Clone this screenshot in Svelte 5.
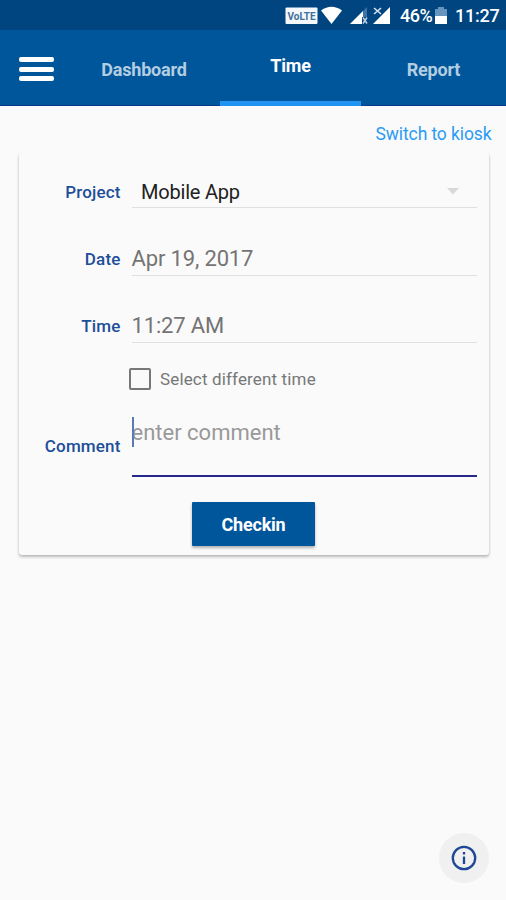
<script>
  const tabs = [
    { name: 'Dashboard', active: false },
    { name: 'Time', active: true },
    { name: 'Report', active: false }
  ];
</script>

<div class="screen">
  <div class="status">
    <svg class="signals" width="108" height="30" viewBox="0 0 108 30">
      <rect x="0.5" y="7.5" width="32" height="16.5" rx="1" fill="#f4f8fb" />
      <text x="2.5" y="19.5" font-size="10" font-weight="700" fill="#416f9b" textLength="28" lengthAdjust="spacingAndGlyphs">VoLTE</text>
      <path d="M36 10.5Q46.500 3 57 10.500L46.500 24Z" fill="#fff" />
      <path d="M82 7V24H65Z" fill="#3c74a5" />
      <path d="M78 11V24H65Z" fill="#fff" />
      <path d="M77 17h6v7h-6z" fill="#00457f" />
      <path d="M78 17.500l4 6M82 17.500l-4 6" stroke="#bdd2e5" stroke-width="1.500" />
      <path d="M105 7V24H88Z" fill="#fff" />
      <path d="M89 8l7 6M96 8l-7 6" stroke="#d6e2ee" stroke-width="1.600" />
    </svg>
    <span class="percent">46%</span>
    <svg class="battery" width="12" height="18" viewBox="0 0 12 18">
      <path d="M0 2h3V0h6v2h3v15H0z" fill="#6594bd" />
      <path d="M0 9h12v8H0z" fill="#fff" />
    </svg>
    <span class="clock">11:27</span>
  </div>

  <header>
    <button class="menu" aria-label="Menu"><i></i><i></i><i></i></button>
    <nav>
      {#each tabs as tab}
        <button class="tab" class:active={tab.active}><span>{tab.name}</span></button>
      {/each}
    </nav>
  </header>

  <main>
    <div class="kiosk"><span>Switch to kiosk</span></div>
    <section class="card">
      <div class="row project">
        <span class="label">Project</span>
        <div class="field">
          <span>Mobile App</span>
          <svg width="12" height="7" viewBox="0 0 12 7"><path d="M0 0h12L6 6.500z" fill="#d8d8d8" /></svg>
        </div>
      </div>
      <div class="row date">
        <span class="label">Date</span>
        <div class="field"><span>Apr 19, 2017</span></div>
      </div>
      <div class="row time">
        <span class="label">Time</span>
        <div class="field"><span>11:27 AM</span></div>
      </div>
      <div class="check"><i></i><span>Select different time</span></div>
      <div class="row comment">
        <span class="label">Comment</span>
        <div class="field"><i class="caret"></i><span>enter comment</span></div>
      </div>
      <button class="checkin"><span>Checkin</span></button>
    </section>
  </main>

  <button class="info" aria-label="Information">
    <svg width="26" height="26" viewBox="0 0 26 26">
      <circle cx="13" cy="13" r="11.200" fill="none" stroke="#1c4896" stroke-width="2.300" />
      <path d="M13 11.500V19M13 7v2.500" stroke="#1c4896" stroke-width="2.300" />
    </svg>
  </button>
</div>

<style>
  :global(body) { margin: 0; }
  .screen {
    position: relative;
    width: 506px;
    height: 900px;
    overflow: hidden;
    background: #fafafa;
    font-family: Roboto, "Liberation Sans", sans-serif;
  }
  button { border: 0; padding: 0; background: none; font: inherit; }
  span { white-space: nowrap; }
  .status {
    display: flex;
    height: 30px;
    padding-left: 285px;
    background: #00457f;
    color: #fff;
    font-size: 18px;
    font-weight: 500;
    line-height: 32px;
  }
  .percent { width: 34px; margin-left: 7px; letter-spacing: -0.5px; }
  .battery { margin: 7px 8px 0 1px; }
  .clock { letter-spacing: -0.25px; }
  header {
    display: flex;
    box-sizing: border-box;
    height: 76px;
    background: #00569b;
    border-bottom: 1px solid #073b87;
  }
  .menu {
    display: flex;
    flex-direction: column;
    gap: 4.500px;
    width: 75px;
    padding: 27px 0 0 19px;
  }
  .menu i { width: 35px; height: 5px; border-radius: 2px; background: #fff; }
  nav { display: flex; flex: 1; height: 76px; }
  .tab {
    box-sizing: border-box;
    width: 145px;
    padding-top: 2px;
    color: #b3cde1;
    font-size: 18px;
    font-weight: 700;
    letter-spacing: -0.2px;
  }
  .tab.active { width: 141px; padding: 0; border-bottom: 5px solid #2094f3; color: #fff; }
  .tab:first-child { padding-right: 7px; }
  .kiosk {
    height: 47px;
    padding-right: 14.500px;
    color: #2b9af3;
    font-size: 17.500px;
    letter-spacing: -0.1px;
    line-height: 57px;
    text-align: right;
  }
  .card {
    box-sizing: border-box;
    width: 470px;
    height: 402px;
    margin-left: 19px;
    padding-top: 1px;
    border-radius: 3px;
    background: #fafafa;
    box-shadow: 0 2px 3px rgba(0, 0, 0, .25), 0 0 2px rgba(0, 0, 0, .09);
    clip-path: inset(0 -5px -6px -5px);
  }
  .row { display: flex; height: 67.500px; align-items: flex-end; }
  .row.project { height: 54px; }
  .label {
    width: 101.500px;
    height: 33px;
    color: #1d4e99;
    font-size: 17px;
    font-weight: 500;
    letter-spacing: 0.15px;
    line-height: 34px;
    text-align: right;
  }
  .date .label, .time .label { height: 34px; }
  .field {
    display: flex;
    box-sizing: border-box;
    width: 345px;
    height: 35px;
    margin-left: 11px;
    border-bottom: 1px solid #e0e0e0;
    color: #747474;
    font-size: 22px;
    letter-spacing: -0.15px;
    line-height: 36px;
  }
  .project .field { justify-content: space-between; padding: 0 18px 0 9.500px; color: #212121; font-size: 20px; letter-spacing: -0.2px; line-height: 38px; }
  .project svg { margin-top: 15px; }
  .check {
    display: flex;
    align-items: center;
    gap: 9px;
    height: 26px;
    padding: 23px 0 0 110px;
    color: #777;
    font-size: 17px;
    letter-spacing: 0.15px;
  }
  .check i { box-sizing: border-box; width: 22px; height: 22px; border: 2px solid #777; border-radius: 2px; }
  .row.comment { height: 85px; }
  .comment .label { height: 48px; }
  .comment .field { position: relative; height: 62px; border-bottom: 2px solid #28288b; color: #999; letter-spacing: 0; line-height: 35px; }
  .caret { position: absolute; left: 0; top: 2px; width: 2px; height: 30px; background: #5b7ab5; }
  .checkin {
    display: block;
    width: 123px;
    height: 44px;
    margin: 25px 0 0 173px;
    border-radius: 1px;
    background: #00569b;
    box-shadow: 0 2px 3px rgba(0, 0, 0, .3);
    color: #fff;
    font-size: 18px;
    font-weight: 700;
    letter-spacing: -0.2px;
  }
  .info {
    position: absolute;
    left: 439px;
    top: 833px;
    display: grid;
    place-items: center;
    width: 50px;
    height: 50px;
    border-radius: 50%;
    background: #f0f0f0;
  }
</style>
